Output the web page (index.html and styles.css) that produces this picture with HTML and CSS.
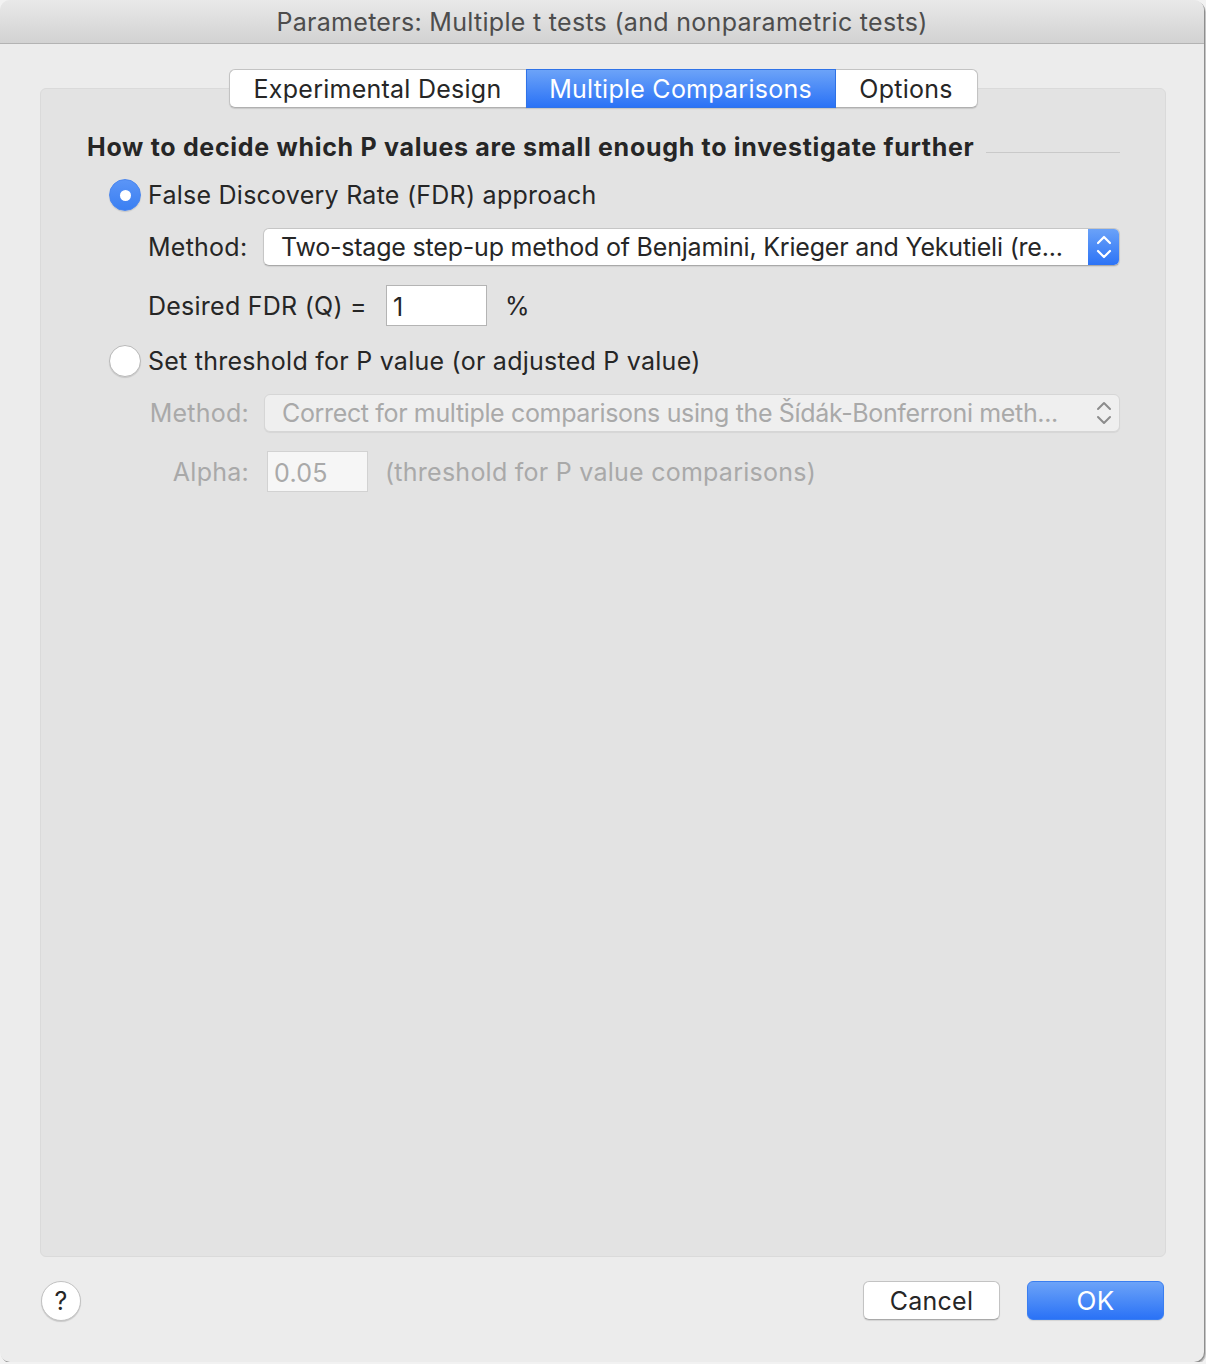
FILE: index.html
```html
<!DOCTYPE html>
<html lang="en">
<head>
    <meta charset="UTF-8">
    <link rel="stylesheet" href="styles.css">
    <title>Parameters: Multiple t tests</title>
</head>
<body>
    <div class="window">
        <div class="titlebar">Parameters: Multiple t tests (and nonparametric tests)</div>

        <div class="content">
            <div class="tabs">
                <div class="tab tab-design">Experimental Design</div>
                <div class="tab tab-multi selected">Multiple Comparisons</div>
                <div class="tab tab-options">Options</div>
            </div>

            <div class="panel">
                <div class="group-title">
                    <span>How to decide which P values are small enough to investigate further</span>
                    <div class="rule"></div>
                </div>

                <div class="radio-row">
                    <span class="radio checked"></span>
                    <span>False Discovery Rate (FDR) approach</span>
                </div>

                <div class="field-row row-method">
                    <span class="label">Method:</span>
                    <div class="popup">
                        <span class="popup-text">Two-stage step-up method of Benjamini, Krieger and Yekutieli (re...</span>
                        <span class="popup-arrows">
                            <svg width="16" height="28" viewBox="0 0 16 28">
                                <polyline points="2,10 8,4 14,10" fill="none" stroke="#fff" stroke-width="2.2" stroke-linecap="round" stroke-linejoin="round"/>
                                <polyline points="2,18 8,24 14,18" fill="none" stroke="#fff" stroke-width="2.2" stroke-linecap="round" stroke-linejoin="round"/>
                            </svg>
                        </span>
                    </div>
                </div>

                <div class="field-row row-fdr">
                    <span class="label-fdr">Desired FDR (Q) =</span>
                    <div class="textbox">1</div>
                    <span class="unit">%</span>
                </div>

                <div class="radio-row row-threshold">
                    <span class="radio"></span>
                    <span>Set threshold for P value (or adjusted P value)</span>
                </div>

                <div class="field-row row-method2 disabled">
                    <span class="label">Method:</span>
                    <div class="popup">
                        <span class="popup-text">Correct for multiple comparisons using the Šídák-Bonferroni meth...</span>
                        <span class="popup-arrows">
                            <svg width="16" height="28" viewBox="0 0 16 28">
                                <polyline points="2,10 8,4 14,10" fill="none" stroke="#8c8c8c" stroke-width="2" stroke-linecap="round" stroke-linejoin="round"/>
                                <polyline points="2,18 8,24 14,18" fill="none" stroke="#8c8c8c" stroke-width="2" stroke-linecap="round" stroke-linejoin="round"/>
                            </svg>
                        </span>
                    </div>
                </div>

                <div class="field-row row-alpha disabled">
                    <span class="label">Alpha:</span>
                    <div class="textbox">0.05</div>
                    <span class="hint">(threshold for P value comparisons)</span>
                </div>
            </div>

            <div class="footer">
                <div class="help">?</div>
                <div class="buttons">
                    <div class="button">Cancel</div>
                    <div class="button default">OK</div>
                </div>
            </div>
        </div>
    </div>
</body>
</html>
```

FILE: styles.css
```css
body {
    margin: 0;
    padding: 0;
    background: #f2f2f2;
    font-family: Inter, "Noto Sans", sans-serif;
    font-size: 25px;
    letter-spacing: 0.25px;
    color: #262626;
}

.window {
    width: 1204px;
    height: 1362px;
    box-sizing: border-box;
    background: #ececec;
    border-radius: 10px;
    box-shadow: 1px 1px 0 #8e8e8e, 2px 2px 0 #c4c4c4;
    overflow: hidden;
}

.titlebar {
    height: 43px;
    line-height: 44px;
    text-align: center;
    color: #4d4d4d;
    letter-spacing: 0.3px;
    background: linear-gradient(#e9e9e9, #d2d2d2);
    border-bottom: 1px solid #b3b3b3;
}

.content {
    padding: 25px 38px 0 40px;
}

/* tabs sit on top of the panel edge */
.tabs {
    display: flex;
    justify-content: center;
    height: 39px;
    margin-bottom: -20px;
    position: relative;
    z-index: 1;
}

.tab {
    height: 37px;
    line-height: 38px;
    background: #fff;
    border: 1px solid #c3c3c3;
    border-bottom-color: #b0b0b0;
    box-shadow: 0 1px 1px rgba(0, 0, 0, 0.12);
    text-align: center;
    box-sizing: content-box;
}

.tab-design {
    width: 296px;
    border-radius: 6px 0 0 6px;
    border-right: none;
}

.tab-multi {
    width: 308px;
}

.tab-options {
    width: 141px;
    border-radius: 0 6px 6px 0;
    border-left: none;
}

.tab.selected {
    background: linear-gradient(#6ca3f8, #2a72f6);
    border-color: #2f73e8;
    color: #fff;
}

.panel {
    height: 1169px;
    box-sizing: border-box;
    background: #e3e3e3;
    border: 1px solid #dadada;
    border-radius: 6px;
    padding: 43px 45px 0 46px;
    width: 1126px;
}

.group-title {
    display: flex;
    align-items: center;
    height: 30px;
    font-weight: 700;
    letter-spacing: 0.7px;
    white-space: nowrap;
}

.group-title .rule {
    flex: 1;
    height: 1px;
    background: #c9c9c9;
    margin: 10px 0 0 12px;
}

.radio-row {
    display: flex;
    align-items: center;
    height: 32px;
    margin-top: 17px;
    padding-left: 22px;
}

.radio {
    width: 30px;
    height: 30px;
    border-radius: 50%;
    background: #fff;
    border: 1px solid #b9b9b9;
    box-shadow: 0 1px 1px rgba(0, 0, 0, 0.12);
    margin-right: 7px;
    display: flex;
    align-items: center;
    justify-content: center;
}

.radio.checked {
    background: linear-gradient(#5b95f7, #3a7ff2);
    border-color: #4a86ee;
}

.radio.checked::after {
    content: "";
    width: 11px;
    height: 11px;
    border-radius: 50%;
    background: #fff;
}

.row-threshold {
    margin-top: 19px;
}

.field-row {
    display: flex;
    align-items: center;
    padding-left: 61px;
}

.field-row .label {
    width: 101px;
    text-align: right;
    margin-right: 14px;
    flex-shrink: 0;
}

.row-method {
    height: 38px;
    margin-top: 17px;
}

.row-method .label {
    text-align: left;
}

.row-fdr {
    height: 41px;
    margin-top: 19px;
}

.row-method2 {
    height: 38px;
    margin-top: 17px;
}

.row-alpha {
    height: 41px;
    margin-top: 19px;
}

.row-alpha .label {
    margin-right: 18px;
}

.popup {
    flex: 1;
    height: 36px;
    display: flex;
    align-items: center;
    background: #fff;
    border: 1px solid #c6c6c6;
    border-bottom-color: #a9a9a9;
    border-radius: 6px;
    box-shadow: 0 1px 1px rgba(0, 0, 0, 0.08);
    overflow: hidden;
}

.popup-text {
    flex: 1;
    min-width: 0;
    padding-left: 17px;
    white-space: nowrap;
    letter-spacing: -0.2px;
}

.popup-arrows {
    flex-shrink: 0;
    width: 32px;
    height: 38px;
    display: flex;
    align-items: center;
    justify-content: center;
    background: linear-gradient(#6ca3f8, #2a72f6);
    margin-right: -1px;
}

.label-fdr {
    margin-right: 19px;
}

.textbox {
    width: 93px;
    height: 39px;
    line-height: 42px;
    padding-left: 6px;
    background: #fff;
    border: 1px solid #b4b4b4;
}

.unit {
    margin-left: 18px;
}

.hint {
    margin-left: 17px;
}

.disabled {
    color: #a9a9a9;
}

.disabled .popup {
    background: #efefef;
    border-color: #d6d6d6;
    box-shadow: 0 1px 1px rgba(0, 0, 0, 0.06);
}

.disabled .popup-arrows {
    background: none;
}

.disabled .textbox {
    background: #f6f6f6;
    border-color: #d2d2d2;
    color: #a9a9a9;
}

.row-method2 .popup {
    margin-left: 1px;
}

.row-method2 .popup-text {
    letter-spacing: -0.35px;
}

.footer {
    display: flex;
    justify-content: space-between;
    align-items: center;
    margin-top: 23px;
    height: 41px;
}

.help {
    width: 38px;
    height: 38px;
    border-radius: 50%;
    background: #fff;
    border: 1px solid #c2c2c2;
    box-shadow: 0 1px 1px rgba(0, 0, 0, 0.15);
    text-align: center;
    line-height: 39px;
    font-size: 25px;
    margin-left: 1px;
}

.buttons {
    display: flex;
    gap: 27px;
    margin-right: 2px;
}

.button {
    width: 135px;
    height: 37px;
    line-height: 38px;
    text-align: center;
    background: #fff;
    border: 1px solid #c3c3c3;
    border-bottom-color: #a9a9a9;
    border-radius: 6px;
    box-shadow: 0 1px 1px rgba(0, 0, 0, 0.1);
}

.button.default {
    background: linear-gradient(#6ca3f8, #2a72f6);
    border-color: #3a7ef0;
    color: #fff;
    font-size: 26px;
}
```
